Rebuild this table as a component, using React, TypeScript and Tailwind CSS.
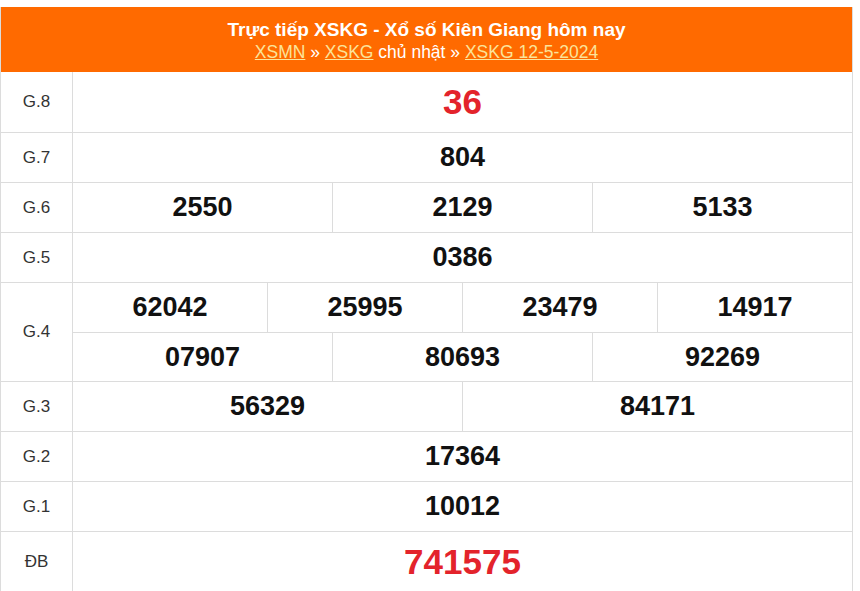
import React from "react";

type Row = { label: string; lines: string[][]; big?: boolean; red?: boolean };

const rows: Row[] = [
  { label: "G.8", lines: [["36"]], red: true, big: true },
  { label: "G.7", lines: [["804"]] },
  { label: "G.6", lines: [["2550", "2129", "5133"]] },
  { label: "G.5", lines: [["0386"]] },
  { label: "G.4", lines: [["62042", "25995", "23479", "14917"], ["07907", "80693", "92269"]] },
  { label: "G.3", lines: [["56329", "84171"]] },
  { label: "G.2", lines: [["17364"]] },
  { label: "G.1", lines: [["10012"]] },
  { label: "ĐB", lines: [["741575"]], red: true, big: true },
];

function Cell({ value, red, big, first }: { value: string; red?: boolean; big?: boolean; first: boolean }) {
  return (
    <div
      className={
        "flex-1 flex items-center justify-center font-bold " +
        (first ? "" : "border-l border-[#dcdcdc] ") +
        (red ? "text-[#e3232b] " : "text-[#111] ") +
        (big ? "text-[35px]" : "text-[27px]")
      }
    >
      {value}
    </div>
  );
}

export default function App() {
  return (
    <div className="w-[860px] h-[591px] bg-white overflow-hidden pt-[7px]" style={{ fontFamily: '"Liberation Sans", Arial, sans-serif' }}>
      <div className="w-[853px] border-x border-[#dcdcdc]">
        <div className="h-[65px] bg-[#ff6a00] flex flex-col items-center justify-center text-white pt-[1px]">
          <div className="text-[19px] font-bold leading-[23px]">Trực tiếp XSKG - Xổ số Kiên Giang hôm nay</div>
          <div className="text-[17.5px] leading-[22px]">
            <span className="underline text-[#fbe39a]">XSMN</span> » <span className="underline text-[#fbe39a]">XSKG</span> chủ nhật »{" "}
            <span className="underline text-[#fbe39a]">XSKG 12-5-2024</span>
          </div>
        </div>
        {rows.map((r) => (
          <div key={r.label} className="flex border-b border-[#dcdcdc]">
            <div className="w-[72px] shrink-0 border-r border-[#dcdcdc] flex items-center justify-center text-[17px] text-[#333]">
              {r.label}
            </div>
            <div className="flex-1 flex flex-col">
              {r.lines.map((line, i) => (
                <div
                  key={i}
                  className={
                    "flex " +
                    (r.label === "G.8" ? "h-[60px] " : r.label === "ĐB" ? "h-[60px] " : "h-[49px] ") +
                    (i > 0 ? "border-t border-[#dcdcdc]" : "")
                  }
                >
                  {line.map((v, j) => (
                    <Cell key={j} value={v} red={r.red} big={r.big} first={j === 0} />
                  ))}
                </div>
              ))}
            </div>
          </div>
        ))}
      </div>
    </div>
  );
}
